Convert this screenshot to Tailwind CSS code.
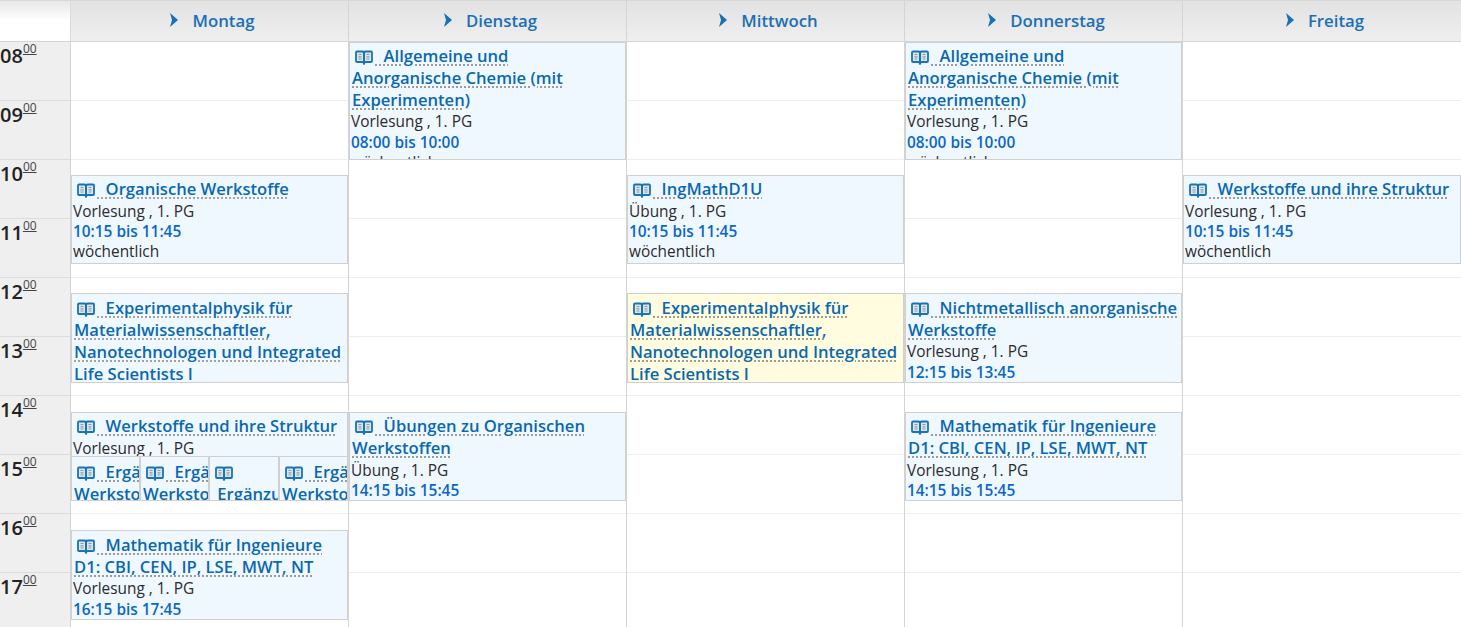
<!DOCTYPE html>
<html lang="de">
<head>
  <meta charset="UTF-8">
  <title>Stundenplan</title>
  <script src="https://cdn.jsdelivr.net/npm/@tailwindcss/browser@4"></script>
</head>
<body class="h-[627px] overflow-hidden bg-white font-['Open_Sans',sans-serif] text-[15.4px] leading-[20px] text-[#2b2b2b]">

  <svg class="hidden">
    <symbol id="book" viewBox="0 0 18 15">
      <path d="M1 2.500Q1 1.500 2 1.500H7Q8.500 1.500 9 2.500Q9.500 1.500 11 1.500H16Q17 1.500 17 2.500V11Q17 12 16 12H11Q9.500 12 9 13Q8.500 12 7 12H2Q1 12 1 11Z" fill="#dfe6ea" stroke="#1673b6" stroke-width="1.800"/>
      <path d="M9 2.500V14.500" stroke="#1673b6" stroke-width="2"/>
      <path d="M3.500 4.500H6.500M3.500 6.800H6.500M3.500 9H6.500M11.500 4.500H14.500M11.500 6.800H14.500M11.500 9H14.500" stroke="#8b9aa5" stroke-width="1.200"/>
    </symbol>
  </svg>

  <!-- Kopfzeile -->
  <div class="flex h-[42px] border-t border-[#d8d8d8] text-[16.8px] font-semibold text-[#1a6fb5]">
    <div class="w-[71px] border-r border-b border-b-[#d4d4d4] border-r-[#dcdcdc] bg-gradient-to-b from-[#e8e8e8] via-white to-white"></div>
    <div class="flex w-[278px] items-center justify-center gap-[14px] border-r border-b border-[#d4d4d4] bg-gradient-to-b from-[#e2e2e2] to-[#efefef] pl-[6px]"><svg class="mb-[2px] h-[14px] w-[8px]" viewBox="0 0 8 14"><path d="M0 0L8 7L0 14L2 7Z" fill="#1a6fb5"/></svg><span>Montag</span></div>
    <div class="flex w-[278px] items-center justify-center gap-[14px] border-r border-b border-[#d4d4d4] bg-gradient-to-b from-[#e2e2e2] to-[#efefef] pl-[6px]"><svg class="mb-[2px] h-[14px] w-[8px]" viewBox="0 0 8 14"><path d="M0 0L8 7L0 14L2 7Z" fill="#1a6fb5"/></svg><span>Dienstag</span></div>
    <div class="flex w-[278px] items-center justify-center gap-[14px] border-r border-b border-[#d4d4d4] bg-gradient-to-b from-[#e2e2e2] to-[#efefef] pl-[6px]"><svg class="mb-[2px] h-[14px] w-[8px]" viewBox="0 0 8 14"><path d="M0 0L8 7L0 14L2 7Z" fill="#1a6fb5"/></svg><span>Mittwoch</span></div>
    <div class="flex w-[278px] items-center justify-center gap-[14px] border-r border-b border-[#d4d4d4] bg-gradient-to-b from-[#e2e2e2] to-[#efefef] pl-[6px]"><svg class="mb-[2px] h-[14px] w-[8px]" viewBox="0 0 8 14"><path d="M0 0L8 7L0 14L2 7Z" fill="#1a6fb5"/></svg><span>Donnerstag</span></div>
    <div class="flex w-[278px] items-center justify-center gap-[14px] border-b border-[#d4d4d4] bg-gradient-to-b from-[#e2e2e2] to-[#efefef] pl-[6px]"><svg class="mb-[2px] h-[14px] w-[8px]" viewBox="0 0 8 14"><path d="M0 0L8 7L0 14L2 7Z" fill="#1a6fb5"/></svg><span>Freitag</span></div>
  </div>

  <div class="flex">
    <!-- Zeitspalte -->
    <div class="w-[71px] border-r border-[#d4d4d4] bg-[#efefef] text-[20px] font-semibold leading-[28px] text-[#222]">
      <div class="h-[59px] border-b border-[#dcdcdc]">08<span class="relative top-[-10px] text-[12px] font-normal text-[#444] underline">00</span></div>
      <div class="h-[59px] border-b border-[#dcdcdc]">09<span class="relative top-[-10px] text-[12px] font-normal text-[#444] underline">00</span></div>
      <div class="h-[59px] border-b border-[#dcdcdc]">10<span class="relative top-[-10px] text-[12px] font-normal text-[#444] underline">00</span></div>
      <div class="h-[59px] border-b border-[#dcdcdc]">11<span class="relative top-[-10px] text-[12px] font-normal text-[#444] underline">00</span></div>
      <div class="h-[59px] border-b border-[#dcdcdc]">12<span class="relative top-[-10px] text-[12px] font-normal text-[#444] underline">00</span></div>
      <div class="h-[59px] border-b border-[#dcdcdc]">13<span class="relative top-[-10px] text-[12px] font-normal text-[#444] underline">00</span></div>
      <div class="h-[59px] border-b border-[#dcdcdc]">14<span class="relative top-[-10px] text-[12px] font-normal text-[#444] underline">00</span></div>
      <div class="h-[59px] border-b border-[#dcdcdc]">15<span class="relative top-[-10px] text-[12px] font-normal text-[#444] underline">00</span></div>
      <div class="h-[59px] border-b border-[#dcdcdc]">16<span class="relative top-[-10px] text-[12px] font-normal text-[#444] underline">00</span></div>
      <div class="h-[59px]">17<span class="relative top-[-10px] text-[12px] font-normal text-[#444] underline">00</span></div>
    </div>

    <!-- Montag -->
    <div class="relative h-[590px] w-[278px] border-r border-[#d4d4d4] bg-[repeating-linear-gradient(to_bottom,white_0,white_58px,#eeeeee_58px,#eeeeee_59px)]">
      <div class="absolute inset-x-0 top-[133px] h-[89px] overflow-hidden border border-[#d0d0d0] bg-[#f0f8ff] px-[1px] pt-[2px]">
        <div class="pr-[2px] pl-[1px] text-[16.6px] leading-[22px] font-semibold text-[#0a68b0]"><a class="underline decoration-dotted decoration-[#888] underline-offset-[3px]" href="#"><svg class="mr-[2px] ml-[3px] inline h-[15px] w-[18px] align-[-3px]"><use href="#book"/></svg>&nbsp; Organische Werkstoffe</a></div>
        <div class="mt-[1px] leading-[21px]">Vorlesung , 1. PG</div>
        <div class="font-semibold text-[#0a66c8]">10:15 bis 11:45</div>
        <div>wöchentlich</div>
      </div>
      <div class="absolute inset-x-0 top-[251px] h-[90px] overflow-hidden border border-[#d0d0d0] bg-[#f0f8ff] px-[1px] pt-[3px]">
        <div class="pr-[2px] pl-[1px] text-[16.6px] leading-[22px] font-semibold text-[#0a68b0]"><a class="underline decoration-dotted decoration-[#888] underline-offset-[3px]" href="#"><svg class="mr-[2px] ml-[3px] inline h-[15px] w-[18px] align-[-3px]"><use href="#book"/></svg>&nbsp; Experimentalphysik für Materialwissenschaftler, Nanotechnologen und Integrated Life Scientists I</a></div>
      </div>
      <div class="absolute inset-x-0 top-[370px] h-[45px] overflow-hidden border border-[#d0d0d0] bg-[#f0f8ff] px-[1px] pt-[2px]">
        <div class="pr-[2px] pl-[1px] text-[16.6px] leading-[22px] font-semibold text-[#0a68b0]"><a class="underline decoration-dotted decoration-[#888] underline-offset-[3px]" href="#"><svg class="mr-[2px] ml-[3px] inline h-[15px] w-[18px] align-[-3px]"><use href="#book"/></svg>&nbsp; Werkstoffe und ihre Struktur</a></div>
        <div class="mt-[1px] leading-[21px]">Vorlesung , 1. PG</div>
      </div>
      <div class="absolute inset-x-0 top-[414px] flex h-[45px] text-[16.6px] leading-[22px] font-semibold text-[#0a68b0]">
        <div class="w-[69px] overflow-hidden whitespace-nowrap border border-[#d0d0d0] bg-[#f0f8ff] pt-[4px] pl-[2px]"><a class="underline decoration-dotted decoration-[#888] underline-offset-[3px]" href="#"><svg class="mr-[2px] ml-[3px] inline h-[15px] w-[18px] align-[-3px]"><use href="#book"/></svg>&nbsp; Ergänzung</a><div>Werkstoffe</div></div>
        <div class="w-[69px] overflow-hidden whitespace-nowrap border border-[#d0d0d0] bg-[#f0f8ff] pt-[4px] pl-[2px]"><a class="underline decoration-dotted decoration-[#888] underline-offset-[3px]" href="#"><svg class="mr-[2px] ml-[3px] inline h-[15px] w-[18px] align-[-3px]"><use href="#book"/></svg>&nbsp; Ergänzung</a><div>Werkstoffe</div></div>
        <div class="w-[70px] overflow-hidden whitespace-nowrap border border-[#d0d0d0] bg-[#f0f8ff] pt-[4px] pl-[2px]"><a href="#"><svg class="mr-[2px] ml-[3px] inline h-[15px] w-[18px] align-[-3px]"><use href="#book"/></svg></a><div class="pl-[1px]">&nbsp;Ergänzung</div></div>
        <div class="w-[69px] overflow-hidden whitespace-nowrap border border-[#d0d0d0] bg-[#f0f8ff] pt-[4px] pl-[2px]"><a class="underline decoration-dotted decoration-[#888] underline-offset-[3px]" href="#"><svg class="mr-[2px] ml-[3px] inline h-[15px] w-[18px] align-[-3px]"><use href="#book"/></svg>&nbsp; Ergänzung</a><div>Werkstoffe</div></div>
      </div>
      <div class="absolute inset-x-0 top-[488px] h-[90px] overflow-hidden border border-[#d0d0d0] bg-[#f0f8ff] px-[1px] pt-[3px]">
        <div class="pr-[2px] pl-[1px] text-[16.6px] leading-[22px] font-semibold text-[#0a68b0]"><a class="underline decoration-dotted decoration-[#888] underline-offset-[3px]" href="#"><svg class="mr-[2px] ml-[3px] inline h-[15px] w-[18px] align-[-3px]"><use href="#book"/></svg>&nbsp; Mathematik für Ingenieure D1: CBI, CEN, IP, LSE, MWT, NT</a></div>
        <div class="leading-[21px]">Vorlesung , 1. PG</div>
        <div class="mt-[1px] font-semibold text-[#0a66c8]">16:15 bis 17:45</div>
      </div>
    </div>

    <!-- Dienstag -->
    <div class="relative h-[590px] w-[278px] border-r border-[#d4d4d4] bg-[repeating-linear-gradient(to_bottom,white_0,white_58px,#eeeeee_58px,#eeeeee_59px)]">
      <div class="absolute inset-x-0 top-0 h-[118px] overflow-hidden border border-[#d0d0d0] bg-[#f0f8ff] px-[1px] pt-[2px]">
        <div class="pr-[2px] pl-[1px] text-[16.6px] leading-[22px] font-semibold text-[#0a68b0]"><a class="underline decoration-dotted decoration-[#888] underline-offset-[3px]" href="#"><svg class="mr-[2px] ml-[3px] inline h-[15px] w-[18px] align-[-3px]"><use href="#book"/></svg>&nbsp; Allgemeine und<br>Anorganische Chemie (mit Experimenten)</a></div>
        <div class="leading-[21px]">Vorlesung , 1. PG</div>
        <div class="mt-[1px] font-semibold text-[#0a66c8]">08:00 bis 10:00</div>
        <div>wöchentlich</div>
      </div>
      <div class="absolute inset-x-0 top-[370px] h-[89px] overflow-hidden border border-[#d0d0d0] bg-[#f0f8ff] px-[1px] pt-[2px]">
        <div class="pr-[2px] pl-[1px] text-[16.6px] leading-[22px] font-semibold text-[#0a68b0]"><a class="underline decoration-dotted decoration-[#888] underline-offset-[3px]" href="#"><svg class="mr-[2px] ml-[3px] inline h-[15px] w-[18px] align-[-3px]"><use href="#book"/></svg>&nbsp; Übungen zu Organischen Werkstoffen</a></div>
        <div class="mt-[1px] leading-[21px]">Übung , 1. PG</div>
        <div class="font-semibold text-[#0a66c8]">14:15 bis 15:45</div>
      </div>
    </div>

    <!-- Mittwoch -->
    <div class="relative h-[590px] w-[278px] border-r border-[#d4d4d4] bg-[repeating-linear-gradient(to_bottom,white_0,white_58px,#eeeeee_58px,#eeeeee_59px)]">
      <div class="absolute inset-x-0 top-[133px] h-[89px] overflow-hidden border border-[#d0d0d0] bg-[#f0f8ff] px-[1px] pt-[2px]">
        <div class="pr-[2px] pl-[1px] text-[16.6px] leading-[22px] font-semibold text-[#0a68b0]"><a class="underline decoration-dotted decoration-[#888] underline-offset-[3px]" href="#"><svg class="mr-[2px] ml-[3px] inline h-[15px] w-[18px] align-[-3px]"><use href="#book"/></svg>&nbsp; IngMathD1U</a></div>
        <div class="mt-[1px] leading-[21px]">Übung , 1. PG</div>
        <div class="font-semibold text-[#0a66c8]">10:15 bis 11:45</div>
        <div>wöchentlich</div>
      </div>
      <div class="absolute inset-x-0 top-[251px] h-[90px] overflow-hidden border border-[#d0d0d0] bg-[#fffcdf] px-[1px] pt-[3px]">
        <div class="pr-[2px] pl-[1px] text-[16.6px] leading-[22px] font-semibold text-[#0a68b0]"><a class="underline decoration-dotted decoration-[#888] underline-offset-[3px]" href="#"><svg class="mr-[2px] ml-[3px] inline h-[15px] w-[18px] align-[-3px]"><use href="#book"/></svg>&nbsp; Experimentalphysik für Materialwissenschaftler, Nanotechnologen und Integrated Life Scientists I</a></div>
      </div>
    </div>

    <!-- Donnerstag -->
    <div class="relative h-[590px] w-[278px] border-r border-[#d4d4d4] bg-[repeating-linear-gradient(to_bottom,white_0,white_58px,#eeeeee_58px,#eeeeee_59px)]">
      <div class="absolute inset-x-0 top-0 h-[118px] overflow-hidden border border-[#d0d0d0] bg-[#f0f8ff] px-[1px] pt-[2px]">
        <div class="pr-[2px] pl-[1px] text-[16.6px] leading-[22px] font-semibold text-[#0a68b0]"><a class="underline decoration-dotted decoration-[#888] underline-offset-[3px]" href="#"><svg class="mr-[2px] ml-[3px] inline h-[15px] w-[18px] align-[-3px]"><use href="#book"/></svg>&nbsp; Allgemeine und<br>Anorganische Chemie (mit Experimenten)</a></div>
        <div class="leading-[21px]">Vorlesung , 1. PG</div>
        <div class="mt-[1px] font-semibold text-[#0a66c8]">08:00 bis 10:00</div>
        <div>wöchentlich</div>
      </div>
      <div class="absolute inset-x-0 top-[251px] h-[90px] overflow-hidden border border-[#d0d0d0] bg-[#f0f8ff] px-[1px] pt-[3px]">
        <div class="pr-[2px] pl-[1px] text-[16.6px] leading-[22px] font-semibold text-[#0a68b0]"><a class="underline decoration-dotted decoration-[#888] underline-offset-[3px]" href="#"><svg class="mr-[2px] ml-[3px] inline h-[15px] w-[18px] align-[-3px]"><use href="#book"/></svg>&nbsp; Nichtmetallisch anorganische Werkstoffe</a></div>
        <div class="leading-[21px]">Vorlesung , 1. PG</div>
        <div class="mt-[1px] font-semibold text-[#0a66c8]">12:15 bis 13:45</div>
      </div>
      <div class="absolute inset-x-0 top-[370px] h-[89px] overflow-hidden border border-[#d0d0d0] bg-[#f0f8ff] px-[1px] pt-[2px]">
        <div class="pr-[2px] pl-[1px] text-[16.6px] leading-[22px] font-semibold text-[#0a68b0]"><a class="underline decoration-dotted decoration-[#888] underline-offset-[3px]" href="#"><svg class="mr-[2px] ml-[3px] inline h-[15px] w-[18px] align-[-3px]"><use href="#book"/></svg>&nbsp; Mathematik für Ingenieure D1: CBI, CEN, IP, LSE, MWT, NT</a></div>
        <div class="mt-[1px] leading-[21px]">Vorlesung , 1. PG</div>
        <div class="font-semibold text-[#0a66c8]">14:15 bis 15:45</div>
      </div>
    </div>

    <!-- Freitag -->
    <div class="relative h-[590px] w-[278px] bg-[repeating-linear-gradient(to_bottom,white_0,white_58px,#eeeeee_58px,#eeeeee_59px)]">
      <div class="absolute inset-x-0 top-[133px] h-[89px] overflow-hidden border border-[#d0d0d0] bg-[#f0f8ff] px-[1px] pt-[2px]">
        <div class="pr-[2px] pl-[1px] text-[16.6px] leading-[22px] font-semibold text-[#0a68b0]"><a class="underline decoration-dotted decoration-[#888] underline-offset-[3px]" href="#"><svg class="mr-[2px] ml-[3px] inline h-[15px] w-[18px] align-[-3px]"><use href="#book"/></svg>&nbsp; Werkstoffe und ihre Struktur</a></div>
        <div class="mt-[1px] leading-[21px]">Vorlesung , 1. PG</div>
        <div class="font-semibold text-[#0a66c8]">10:15 bis 11:45</div>
        <div>wöchentlich</div>
      </div>
    </div>
  </div>

</body>
</html>
